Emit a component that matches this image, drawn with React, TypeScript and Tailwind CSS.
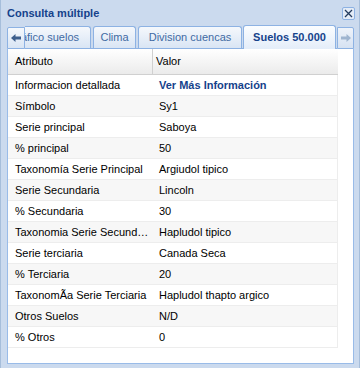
import React from 'react';

const ROWS: { attr: string; value: string; link?: boolean }[] = [
  { attr: 'Informacion detallada', value: 'Ver Más Información', link: true },
  { attr: 'Símbolo', value: 'Sy1' },
  { attr: 'Serie principal', value: 'Saboya' },
  { attr: '% principal', value: '50' },
  { attr: 'Taxonomía Serie Principal', value: 'Argiudol tipico' },
  { attr: 'Serie Secundaria', value: 'Lincoln' },
  { attr: '% Secundaria', value: '30' },
  { attr: 'Taxonomia Serie Secundaria', value: 'Hapludol tipico' },
  { attr: 'Serie terciaria', value: 'Canada Seca' },
  { attr: '% Terciaria', value: '20' },
  { attr: 'TaxonomÃa Serie Terciaria', value: 'Hapludol thapto argico' },
  { attr: 'Otros Suelos', value: 'N/D' },
  { attr: '% Otros', value: '0' },
];

function Arrow({ dir, color }: { dir: 'left' | 'right'; color: string }) {
  return (
    <svg width="10" height="8" viewBox="0 0 10 8" className={dir === 'right' ? 'rotate-180' : ''}>
      <polygon points="0,4 4.5,0 4.5,8" fill={color} />
      <rect x="4" y="2.5" width="6" height="3" fill={color} />
    </svg>
  );
}

export default function App() {
  return (
    <div className="w-[360px] h-[368px] bg-[#cbdaee] shadow-[inset_1px_0_0_#a6bedb,inset_-1px_0_0_#a6bedb] font-['Liberation_Sans',Arial,sans-serif] text-[11px] text-black flex flex-col overflow-hidden">
      {/* Title bar */}
      <div className="h-[25px] flex items-center justify-between pl-[7px] pr-[5px]">
        <span className="font-bold text-[#15428b] pt-[1px]">Consulta múltiple</span>
        <button className="w-[13px] h-[13px] mt-[1px] flex items-center justify-center bg-[#e4ecf7] border border-[#8db2e3] rounded-[2px]">
          <svg width="9" height="9" viewBox="0 0 9 9">
            <path d="M1 1 L8 8 M8 1 L1 8" stroke="#243c5e" strokeWidth="1.3" />
          </svg>
        </button>
      </div>

      <div className="ml-[7px] mr-[6px] flex flex-col">
        {/* Tab strip */}
        <div className="h-[24px] flex items-end">
          <div className="w-[18px] h-[22px] mb-0 flex items-center justify-center border border-[#8db2e3] rounded-tl-[2px] bg-gradient-to-b from-[#f5f8fc] to-[#d9e5f4]">
            <Arrow dir="left" color="#3d5f8d" />
          </div>
          <div className="flex-1 h-full overflow-hidden flex items-end bg-[linear-gradient(to_top,#8db2e3_1px,transparent_1px)]">
            <div className="ml-[-24px] shrink-0 w-[90px] h-[22px] mb-px flex items-center justify-end pr-[11px] whitespace-nowrap text-[#416aa3] border border-b-0 border-[#8db2e3] rounded-t-[3px] bg-gradient-to-b from-[#f5f8fc] to-[#d9e5f4]">
              Gráfico suelos
            </div>
            <div className="ml-[2px] shrink-0 w-[43px] h-[22px] mb-px flex items-center justify-center whitespace-nowrap text-[#416aa3] border border-b-0 border-[#8db2e3] rounded-t-[3px] bg-gradient-to-b from-[#f5f8fc] to-[#d9e5f4]">
              Clima
            </div>
            <div className="ml-[2px] shrink-0 w-[104px] h-[22px] mb-px flex items-center justify-center whitespace-nowrap text-[#416aa3] border border-b-0 border-[#8db2e3] rounded-t-[3px] bg-gradient-to-b from-[#f5f8fc] to-[#d9e5f4]">
              Division cuencas
            </div>
            <div className="ml-[1px] shrink-0 w-[93px] h-[24px] flex items-center justify-center whitespace-nowrap font-bold text-[#15428b] border border-b-0 border-[#8db2e3] rounded-t-[3px] bg-gradient-to-b from-[#fbfdff] to-[#e4edf9]">
              Suelos 50.000
            </div>
          </div>
          <div className="w-[17px] h-[22px] flex items-center justify-center border border-[#8db2e3] rounded-tr-[2px] bg-gradient-to-b from-[#eef3fa] to-[#d6e2f2]">
            <Arrow dir="right" color="#9fb5d0" />
          </div>
        </div>

        {/* Body */}
        <div className="h-[315px] bg-white border-x border-b border-[#99bbe8]">
          <div className="w-[330px]">
            <div className="h-[26px] flex border-b border-[#d0d0d0] bg-gradient-to-b from-white to-[#ebebeb]">
              <div className="w-[145px] pl-[7px] flex items-center border-r border-[#d0d0d0]">Atributo</div>
              <div className="flex-1 pl-[3px] flex items-center">Valor</div>
            </div>
            {ROWS.map((r, i) => (
              <div
                key={i}
                className={`h-[21px] flex items-center border-b border-r border-[#ededed] ${i % 2 === 1 ? 'bg-[#f7f7f7]' : 'bg-white'}`}
              >
                <div className="w-[145px] shrink-0 pl-[7px] pr-[3px] truncate">{r.attr}</div>
                <div className={`pl-[6px] whitespace-nowrap ${r.link ? 'font-bold text-[#15428b]' : ''}`}>{r.value}</div>
              </div>
            ))}
          </div>
        </div>
      </div>
    </div>
  );
}
